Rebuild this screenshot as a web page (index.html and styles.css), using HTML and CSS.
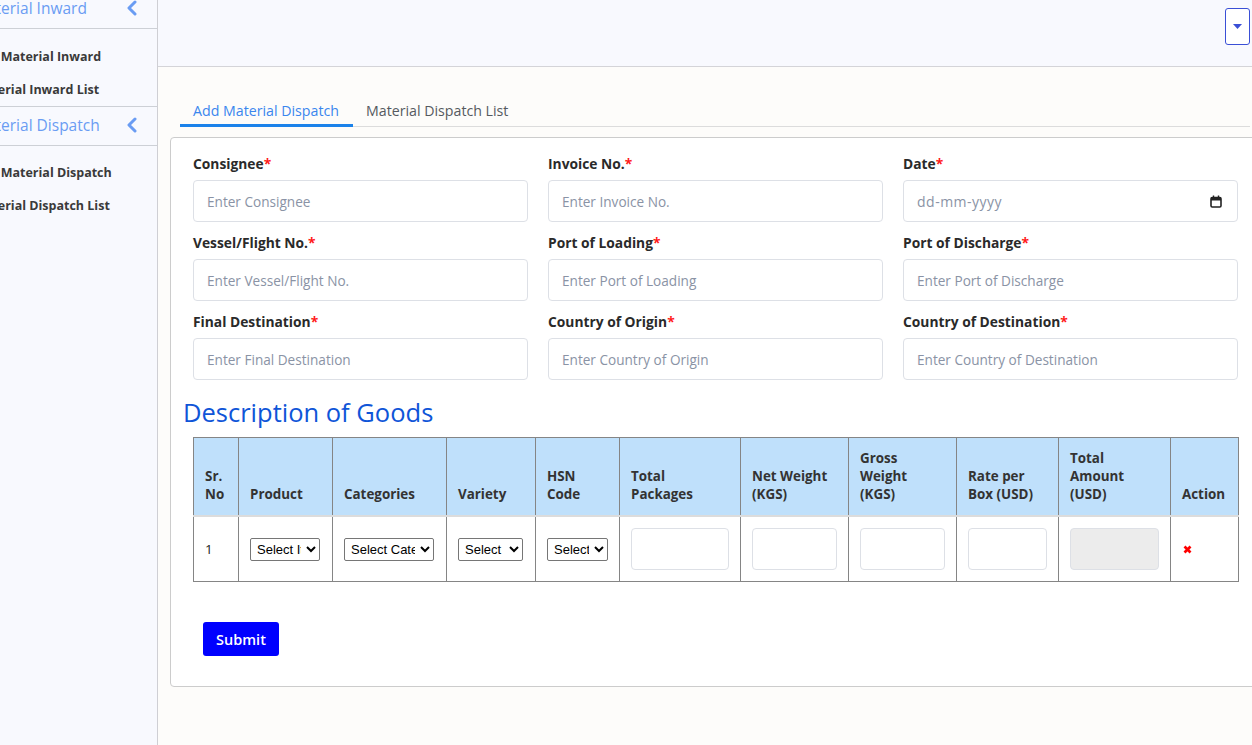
FILE: index.html
```html
<!DOCTYPE html>
<html lang="en">
<head>
<meta charset="utf-8">
<title>Material Dispatch</title>
<link rel="stylesheet" href="styles.css">
</head>
<body>
<aside class="sidebar">
  <div class="side-inner">
    <div class="side-head">
      <span>Material Inward</span>
      <svg class="chev" width="12" height="16" viewBox="0 0 12 16"><polyline points="9,2 3,8 9,14" fill="none" stroke="#6a9cf3" stroke-width="3" stroke-linecap="round" stroke-linejoin="round"/></svg>
    </div>
    <ul class="side-list">
      <li>Add Material Inward</li>
      <li>Material Inward List</li>
    </ul>
    <div class="side-head">
      <span>Material Dispatch</span>
      <svg class="chev" width="12" height="16" viewBox="0 0 12 16"><polyline points="9,2 3,8 9,14" fill="none" stroke="#6a9cf3" stroke-width="3" stroke-linecap="round" stroke-linejoin="round"/></svg>
    </div>
    <ul class="side-list second">
      <li>Add Material Dispatch</li>
      <li>Material Dispatch List</li>
    </ul>
  </div>
</aside>
<div class="main">
  <header class="topbar">
    <button class="drop-btn" type="button" aria-label="menu">
      <svg width="9" height="5" viewBox="0 0 9 5"><polygon points="0,0 9,0 4.5,5" fill="#3a4fd6"/></svg>
    </button>
  </header>
  <section class="content">
    <nav class="tabs">
      <div class="tab active">Add Material Dispatch</div>
      <div class="tab">Material Dispatch List</div>
    </nav>
    <div class="card">
      <div class="form-grid">
        <div class="field"><label>Consignee<span class="req">*</span></label><div class="input">Enter Consignee</div></div>
        <div class="field"><label>Invoice No.<span class="req">*</span></label><div class="input">Enter Invoice No.</div></div>
        <div class="field"><label>Date<span class="req">*</span></label><div class="input date"><span>dd-mm-yyyy</span><svg width="12" height="13" viewBox="0 0 12 13"><rect x="1" y="2.5" width="10" height="9.5" rx="1.2" fill="none" stroke="#222" stroke-width="1.6"/><rect x="1" y="2.5" width="10" height="3" fill="#222"/><line x1="3.5" y1="0.5" x2="3.5" y2="3" stroke="#222" stroke-width="1.4"/><line x1="8.5" y1="0.5" x2="8.5" y2="3" stroke="#222" stroke-width="1.4"/></svg></div></div>
        <div class="field"><label>Vessel/Flight No.<span class="req">*</span></label><div class="input">Enter Vessel/Flight No.</div></div>
        <div class="field"><label>Port of Loading<span class="req">*</span></label><div class="input">Enter Port of Loading</div></div>
        <div class="field"><label>Port of Discharge<span class="req">*</span></label><div class="input">Enter Port of Discharge</div></div>
        <div class="field"><label>Final Destination<span class="req">*</span></label><div class="input">Enter Final Destination</div></div>
        <div class="field"><label>Country of Origin<span class="req">*</span></label><div class="input">Enter Country of Origin</div></div>
        <div class="field"><label>Country of Destination<span class="req">*</span></label><div class="input">Enter Country of Destination</div></div>
      </div>
      <h2 class="section-title">Description of Goods</h2>
      <table class="goods">
        <colgroup>
          <col class="c-sr"><col class="c-prod"><col class="c-cat"><col class="c-var"><col class="c-hsn"><col class="c-pkg"><col class="c-net"><col class="c-gross"><col class="c-rate"><col class="c-amt"><col class="c-act">
        </colgroup>
        <thead>
          <tr>
            <th>Sr.<br>No</th>
            <th>Product</th>
            <th>Categories</th>
            <th>Variety</th>
            <th>HSN<br>Code</th>
            <th>Total<br>Packages</th>
            <th>Net Weight<br>(KGS)</th>
            <th>Gross<br>Weight<br>(KGS)</th>
            <th>Rate per<br>Box (USD)</th>
            <th>Total<br>Amount<br>(USD)</th>
            <th>Action</th>
          </tr>
        </thead>
        <tbody>
          <tr>
            <td>1</td>
            <td><select class="sel w-prod"><option>Select Item</option></select></td>
            <td><select class="sel w-cat"><option>Select Category</option></select></td>
            <td><select class="sel w-var"><option>Select</option></select></td>
            <td><select class="sel w-hsn"><option>Select HSN</option></select></td>
            <td><div class="cell-input w-pkg"></div></td>
            <td><div class="cell-input w-net"></div></td>
            <td><div class="cell-input w-gross"></div></td>
            <td><div class="cell-input w-rate"></div></td>
            <td><div class="cell-input w-amt disabled"></div></td>
            <td><svg class="del" width="9" height="9" viewBox="0 0 9 9"><line x1="1.5" y1="1.5" x2="7.5" y2="7.5" stroke="#f00" stroke-width="2.6"/><line x1="7.5" y1="1.5" x2="1.5" y2="7.5" stroke="#f00" stroke-width="2.6"/></svg></td>
          </tr>
        </tbody>
      </table>
      <button class="submit" type="button">Submit</button>
    </div>
  </section>
</div>
</body>
</html>
```

FILE: styles.css
```css
* { box-sizing: border-box; }
html, body { margin: 0; padding: 0; }
body {
  width: 1252px;
  height: 745px;
  overflow: hidden;
  display: flex;
  font-family: "Open Sans", "DejaVu Sans", sans-serif;
  color: #2b2b2b;
  background: #fdfcfa;
}

/* Sidebar */
.sidebar {
  width: 158px;
  flex: none;
  background: #f8f9fe;
  border-right: 1px solid #cfcfd4;
  overflow: hidden;
}
.side-inner {
  margin-top: -11px;
  margin-left: -27px;
  width: 184px;
}
.side-head {
  height: 40px;
  display: flex;
  align-items: center;
  justify-content: space-between;
  padding: 0 19px 3px 0;
  border-top: 1px solid #cdd0d6;
  border-bottom: 1px solid #cdd0d6;
  color: #6a9cf3;
  font-size: 15.5px;
}
.chev { display: block; }
.side-list {
  list-style: none;
  margin: 0;
  padding: 11px 0 0 0;
}
.side-list.second { padding-top: 10px; }
.side-list li {
  height: 33px;
  line-height: 33px;
  font-size: 12.5px;
  font-weight: 700;
  color: #3a3a3a;
  white-space: nowrap;
}

/* Main */
.main {
  flex: 1;
  min-width: 0;
  display: flex;
  flex-direction: column;
  overflow: hidden;
}
.topbar {
  height: 67px;
  flex: none;
  background: #f8f9fe;
  border-bottom: 1px solid #d4d4d8;
  display: flex;
  justify-content: flex-end;
  align-items: flex-start;
  padding: 8px 2px 0 0;
}
.drop-btn {
  width: 25px;
  height: 37px;
  border: 1.5px solid #3a4fd6;
  border-radius: 3px;
  background: #fff;
  padding: 0;
  display: flex;
  align-items: center;
  justify-content: center;
}
.drop-btn svg { display: block; }

.content {
  padding: 27px 0 0 12px;
}
.tabs {
  display: flex;
  margin-left: 10px;
  border-bottom: 1px solid #dcdcdc;
  width: 1070px;
}
.tab {
  padding: 0 14px 0 13px;
  height: 33px;
  line-height: 33px;
  font-size: 14.2px;
  color: #555a60;
  margin-bottom: -1px;
  white-space: nowrap;
}
.tab.active {
  color: #3a86ee;
  border-bottom: 3px solid #1b82ea;
}

.card {
  margin-top: 10px;
  width: 1091px;
  background: #fff;
  border: 1px solid #cccccc;
  border-radius: 4px;
  padding: 16px 22px 30px 22px;
}
.form-grid {
  display: grid;
  grid-template-columns: repeat(3, 335px);
  column-gap: 20px;
  row-gap: 11px;
}
.field label {
  display: block;
  height: 20px;
  line-height: 20px;
  font-size: 13.8px;
  font-weight: 700;
  color: #2a2a2a;
  margin-bottom: 6px;
  white-space: nowrap;
}
.req { color: #ff1a1a; }
.input {
  height: 42px;
  border: 1px solid #dde0e6;
  border-radius: 4px;
  padding: 0 13px;
  display: flex;
  align-items: center;
  font-size: 13.6px;
  color: #8a93a5;
  white-space: nowrap;
}
.input.date { justify-content: space-between; padding-right: 15px; font-size: 14px; letter-spacing: 0.5px; }

.section-title {
  margin: 18px 0 10px -10px;
  font-size: 25.5px;
  line-height: 29px;
  font-weight: 400;
  color: #0f55d8;
}

.goods {
  border-collapse: collapse;
  width: 1045px;
  table-layout: fixed;
  font-size: 13.4px;
}
.c-sr { width: 45px; }
.c-prod { width: 94px; }
.c-cat { width: 114px; }
.c-var { width: 89px; }
.c-hsn { width: 84px; }
.c-pkg { width: 121px; }
.c-net { width: 108px; }
.c-gross { width: 108px; }
.c-rate { width: 102px; }
.c-amt { width: 112px; }
.c-act { width: 68px; }
.goods th, .goods td {
  border: 1px solid #858585;
  padding: 11px 11px;
  text-align: left;
}
.goods th {
  background: #bfe0fb;
  vertical-align: bottom;
  font-weight: 700;
  line-height: 18px;
  color: #333;
  height: 78px;
  padding-top: 11px;
  padding-bottom: 12px;
  border-bottom: 2px solid #dcdcdc;
}
.goods td {
  background: #fff;
  vertical-align: middle;
  height: 64px;
  color: #222;
}
.sel {
  height: 23px;
  font-family: "Liberation Sans", Arial, sans-serif;
  font-size: 13px;
  color: #000;
  background: #fff;
  border: 1px solid #767676;
  border-radius: 2px;
  padding: 0 2px;
}
.w-prod { width: 70px; }
.w-cat { width: 90px; }
.w-var { width: 65px; }
.w-hsn { width: 61px; }
.cell-input {
  height: 42px;
  border: 1px solid #dde0e6;
  border-radius: 4px;
  background: #fff;
}
.cell-input.disabled { background: #ececec; }
.w-pkg { width: 98px; }
.w-net { width: 85px; }
.w-gross { width: 85px; }
.w-rate { width: 79px; }
.w-amt { width: 89px; }
.del { display: block; margin-left: 1px; }

.submit {
  margin: 40px 0 0 10px;
  width: 76px;
  height: 34px;
  border: none;
  border-radius: 3px;
  background: #0000ff;
  color: #fff;
  font-family: "Open Sans", sans-serif;
  font-size: 14.5px;
  font-weight: 600;
  padding: 0;
}
```
